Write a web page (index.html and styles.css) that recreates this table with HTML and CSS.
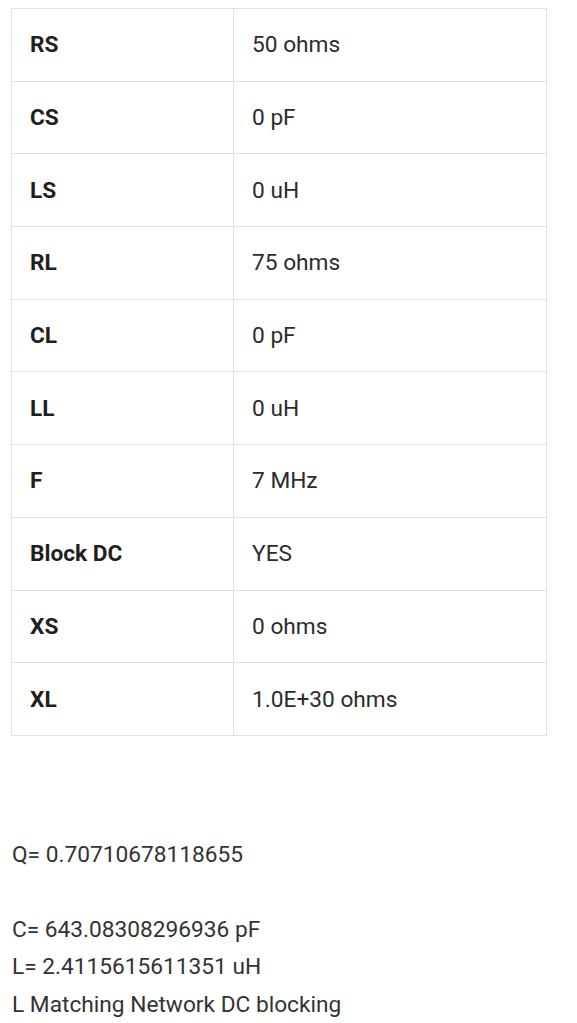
FILE: index.html
```html
<!DOCTYPE html>
<html>
<head>
<meta charset="utf-8">
<link rel="stylesheet" href="styles.css">
</head>
<body>
<table class="params">
<tr><th>RS</th><td>50 ohms</td></tr>
<tr><th>CS</th><td>0 pF</td></tr>
<tr><th>LS</th><td>0 uH</td></tr>
<tr><th>RL</th><td>75 ohms</td></tr>
<tr><th>CL</th><td>0 pF</td></tr>
<tr><th>LL</th><td>0 uH</td></tr>
<tr><th>F</th><td>7 MHz</td></tr>
<tr><th>Block DC</th><td>YES</td></tr>
<tr><th>XS</th><td>0 ohms</td></tr>
<tr><th>XL</th><td>1.0E+30 ohms</td></tr>
</table>
<div class="results">
<p class="line">Q= 0.70710678118655</p>
<p class="line blank">&nbsp;</p>
<p class="line">C= 643.08308296936 pF</p>
<p class="line">L= 2.4115615611351 uH</p>
<p class="line">L Matching Network DC blocking</p>
</div>
</body>
</html>
```
FILE: styles.css
```css
html, body {
  margin: 0;
  padding: 0;
  background: #ffffff;
}
body {
  padding: 8px 30px 0 11px;
  font-family: Roboto, "Noto Sans", sans-serif;
  color: #2a2a2a;
}
.params {
  width: 536px;
  border-collapse: collapse;
  border: 1px solid #e2e2e2;
}
.params th,
.params td {
  border: 1px solid #e2e2e2;
  height: 72.7px;
  padding: 0 18px;
  box-sizing: border-box;
  font-size: 22.7px;
  text-align: left;
  vertical-align: middle;
}
.params th {
  width: 222px;
  font-weight: 700;
  color: #1f1f1f;
}
.params td {
  font-weight: 400;
  color: #2c2c2c;
}
.results {
  margin-top: 100px;
  padding-left: 1px;
}
.line {
  margin: 0;
  font-size: 22.7px;
  line-height: 37.5px;
  color: #333333;
}
```
